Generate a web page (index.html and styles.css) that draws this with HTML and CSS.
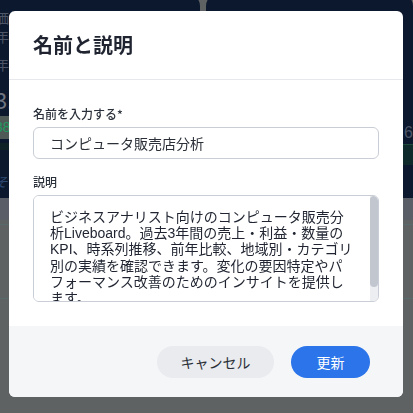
FILE: index.html
```html
<!DOCTYPE html>
<html lang="ja">
<head>
<meta charset="utf-8">
<title>名前と説明</title>
<link rel="stylesheet" href="styles.css">
</head>
<body>
<div class="page">
  <div class="cards">
    <div class="card card-left">
      <div class="bg-line l1">価格</div>
      <div class="bg-line l2">年</div>
      <div class="bg-line l3">年</div>
      <div class="bg-line big">3.</div>
      <div class="bg-chip">38</div>
      <div class="bg-band"></div>
      <div class="bg-line italic">そ</div>
    </div>
    <div class="card card-right">
      <div class="r-num">.6</div>
      <div class="r-chip">損</div>
    </div>
  </div>
  <div class="strip"></div>
  <div class="lower">
    <div class="rule"></div>
    <div class="rule second"></div>
  </div>
</div>

<div class="modal" role="dialog">
  <div class="modal-header">
    <h2 class="modal-title">名前と説明</h2>
  </div>
  <div class="modal-body">
    <label class="field-label">名前を入力する*</label>
    <input class="text-input" type="text" value="コンピュータ販売店分析">
    <label class="field-label second">説明</label>
    <div class="area-box">
      <textarea class="text-area">ビジネスアナリスト向けのコンピュータ販売分析Liveboard。過去3年間の売上・利益・数量のKPI、時系列推移、前年比較、地域別・カテゴリ別の実績を確認できます。変化の要因特定やパフォーマンス改善のためのインサイトを提供します。</textarea>
      <div class="scroll-track"><div class="scroll-thumb"></div></div>
    </div>
  </div>
  <div class="modal-footer">
    <button class="btn btn-secondary">キャンセル</button>
    <button class="btn btn-primary">更新</button>
  </div>
</div>
</body>
</html>
```

FILE: styles.css
```css
* { box-sizing: border-box; }

html, body {
  margin: 0;
  padding: 0;
  width: 413px;
  height: 413px;
  overflow: hidden;
}

body {
  background: #5f6263;
  font-family: "Liberation Sans", "Noto Sans CJK JP", sans-serif;
}

/* ---------- dimmed page behind the dialog ---------- */
.page {
  display: flex;
  flex-direction: column;
}

.cards {
  display: grid;
  grid-template-columns: 200px 1fr;
  column-gap: 6px;
  height: 204px;
  margin-top: -6px;
}

.card {
  background: #0c182e;
  border-radius: 12px 12px 0 0;
  display: flex;
  flex-direction: column;
}

.card-left {
  padding-top: 14px;
  margin-left: -5px;
}

.bg-line {
  color: #4d5566;
  font-family: "Noto Sans CJK JP", sans-serif;
  font-size: 14px;
  line-height: 19px;
}

.bg-line.l3 { margin-top: 9px; }
.bg-line.big { font-size: 22px; color: #6f7480; margin-top: 11px; line-height: 28px; }
.bg-line.italic { font-size: 13px; color: #2f4a74; font-style: italic; margin-top: 23px; line-height: 18px; }

.bg-chip {
  background: #4f5a57;
  color: #1f9a5f;
  font-size: 14px;
  height: 23px;
  line-height: 23px;
  margin-top: 3px;
  width: 60px;
}

.bg-band {
  height: 7px;
  background: #0f2327;
  margin-top: 4px;
}

.card-right {
  align-items: flex-end;
  padding-top: 129px;
}

.r-num {
  color: #4d5566;
  font-size: 16px;
  line-height: 20px;
}

.r-chip {
  margin-top: 1px;
  width: 40px;
  height: 21px;
  background: #0f2a2a;
  border-top: 1px solid #1d4a3a;
  color: #1c7a4c;
  font-size: 13px;
  line-height: 20px;
  font-family: "Noto Sans CJK JP", sans-serif;
}

.strip {
  height: 22px;
  background: #5a5e67;
}

.lower {
  display: flex;
  flex-direction: column;
}

.rule {
  height: 1px;
  background: #586a6c;
  margin-top: 4px;
}

.rule.second { margin-top: 73px; }

/* ---------- dialog ---------- */
.modal {
  position: fixed;
  top: 11px;
  left: 9px;
  width: 394px;
  height: 386px;
  background: #ffffff;
  border-radius: 6px;
  overflow: hidden;
  display: flex;
  flex-direction: column;
}

.modal-header {
  height: 69px;
  padding: 0 24px;
  display: flex;
  align-items: center;
  border-bottom: 1px solid #e6e8eb;
  flex: none;
}

.modal-title {
  margin: 0;
  font-family: "Noto Sans CJK JP", sans-serif;
  font-size: 20px;
  font-weight: 600;
  color: #1f2430;
  line-height: 24px;
}

.modal-body {
  padding: 25px 24px 24px;
  display: flex;
  flex-direction: column;
  flex: none;
}

.field-label {
  font-family: "Noto Sans CJK JP", sans-serif;
  font-size: 12px;
  font-weight: 500;
  color: #2b313b;
  line-height: 18px;
  margin-bottom: 4px;
}

.field-label.second { margin-top: 14px; }

.text-input {
  height: 32px;
  border: 1px solid #c9cdd5;
  border-radius: 6px;
  padding: 0 16px;
  font-family: "Liberation Sans", "Noto Sans CJK JP", sans-serif;
  font-size: 14px;
  color: #2a2f38;
  outline: none;
  background: #fff;
}

.area-box {
  height: 107px;
  border: 1px solid #c9cdd5;
  border-radius: 6px;
  overflow: hidden;
  display: flex;
  background: #fff;
}

.text-area {
  flex: 1;
  min-width: 0;
  height: 100%;
  border: none;
  padding: 13px 15px 0 16px;
  font-family: "Liberation Sans", "Noto Sans CJK JP", sans-serif;
  font-size: 14px;
  line-height: 16.2px;
  color: #1f2430;
  resize: none;
  outline: none;
  overflow: hidden;
  background: #fff;
}

.scroll-track {
  width: 8px;
  flex: none;
  background: #eceef1;
  display: flex;
  flex-direction: column;
}

.scroll-thumb {
  height: 91px;
  background: #c2c6ce;
  border-radius: 4px;
}

.modal-footer {
  flex: 1;
  background: #f5f6f8;
  padding: 20px 33px 0 24px;
  display: flex;
  justify-content: flex-end;
  align-items: flex-start;
  gap: 17px;
}

.btn {
  height: 32px;
  border: none;
  border-radius: 16px;
  font-family: "Noto Sans CJK JP", sans-serif;
  font-size: 14px;
  cursor: pointer;
}

.btn-secondary {
  background: #e9ebef;
  color: #2a2f38;
  padding: 0 23px;
  min-width: 117px;
}

.btn-primary {
  background: #2b74e9;
  color: #ffffff;
  padding: 0 24px;
  min-width: 79px;
}
```
